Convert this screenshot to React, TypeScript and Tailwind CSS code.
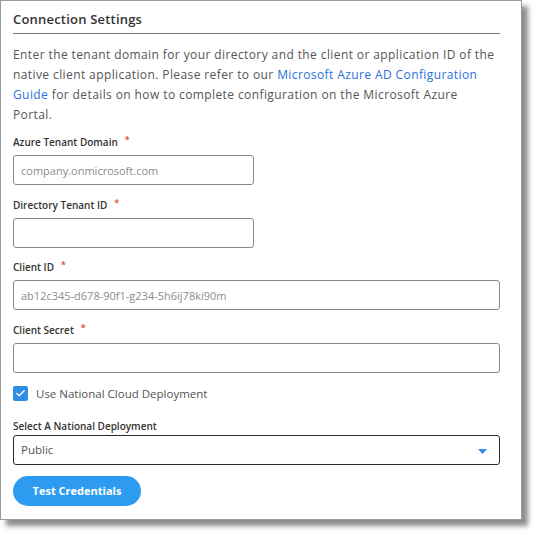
import { Check } from "lucide-react";

const Label = ({ text, required }: { text: string; required?: boolean }) => (
  <div className="flex items-start h-[14px] text-[10px] font-semibold text-[#333] leading-[14px]">
    {text}
    {required && <span className="ml-[7px] text-[#e0403a] text-[9px] leading-[10px]">*</span>}
  </div>
);

const Field = ({
  label,
  placeholder,
  wide,
}: {
  label: string;
  placeholder?: string;
  wide?: boolean;
}) => (
  <div className="flex flex-col">
    <Label text={label} required />
    <input
      placeholder={placeholder}
      className={`mt-[6px] h-[30px] rounded-[3px] border border-[#8a8a8a] px-[7px] text-[11px] text-[#444] placeholder:text-[#8c8c8c] outline-none ${
        wide ? "w-full" : "w-[241px]"
      }`}
    />
  </div>
);

export default function App() {
  return (
    <div className="bg-white w-[537px] h-[535px]" style={{ fontFamily: "'Open Sans', 'Liberation Sans', sans-serif" }}>
      <div className="w-[522px] h-[520px] border border-[#9b9b9b] bg-white shadow-[6px_6px_5px_rgba(0,0,0,0.45)] pl-[12px] pr-[21px] pt-[9px]">
        <h2 className="text-[13px] font-semibold text-[#333] leading-[18px] pb-[5px] border-b border-[#777] tracking-[0.2px]">
          Connection Settings
        </h2>

        <p className="mt-[11px] text-[12px] leading-[20px] text-[#555] tracking-[0.4px] whitespace-nowrap">
          Enter the tenant domain for your directory and the client or application ID of the
          <br />
          native client application. Please refer to our{" "}
          <a className="text-[#2a6fdc]">Microsoft Azure AD Configuration</a>
          <br />
          <a className="text-[#2a6fdc]">Guide</a> for details on how to complete configuration on the Microsoft Azure
          <br />
          Portal.
        </p>

        <div className="mt-[10px] flex flex-col gap-[12.5px]">
          <Field label="Azure Tenant Domain" placeholder="company.onmicrosoft.com" />
          <Field label="Directory Tenant ID" />
          <Field label="Client ID" placeholder="ab12c345-d678-90f1-g234-5h6ij78ki90m" wide />
          <Field label="Client Secret" wide />
        </div>

        <label className="mt-[12px] flex items-center gap-[8px] text-[11.5px] text-[#555]">
          <span className="w-[15px] h-[15px] rounded-[2px] bg-[#2f8de4] flex items-center justify-center">
            <Check size={11} strokeWidth={3} className="text-white" />
          </span>
          Use National Cloud Deployment
        </label>

        <div className="mt-[17px]">
          <Label text="Select A National Deployment" />
          <div className="mt-[2px] h-[30px] rounded-[3px] border border-[#2b2b2b] flex items-center justify-between px-[7px] text-[11.5px] text-[#555]">
            <span>Public</span>
            <svg width="9" height="5" viewBox="0 0 9 5" className="mr-[5px] mt-[3px]">
              <path d="M0 0h9L4.5 5z" fill="#2f8de4" />
            </svg>
          </div>
        </div>

        <button className="mt-[11px] w-[128px] h-[30px] rounded-full bg-[#2d9cf0] text-white text-[11px] font-bold">
          Test Credentials
        </button>
      </div>
    </div>
  );
}
